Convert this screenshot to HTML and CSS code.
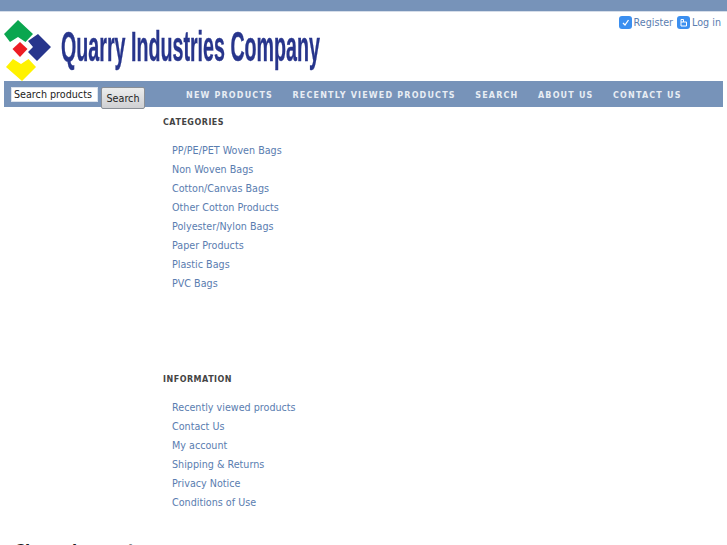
FILE: index.html
```html
<!DOCTYPE html>
<html lang="en">
<head>
<meta charset="utf-8">
<title>Quarry Industries Company</title>
<link rel="stylesheet" href="styles.css">
</head>
<body>
<div class="topbar"></div>
<div class="page">
  <header class="header">
    <svg class="logo" width="320" height="66" viewBox="0 0 320 66" aria-label="Quarry Industries Company">
      <path fill="#0aa64f" d="M4 19 L18 5 L33 19 L25.500 27 L18 22 L10 27 Z"/>
      <path fill="#27358c" d="M38 19 L51 32 L37 46 L28 37 L33 32 L28 26 Z"/>
      <path fill="#ed1c24" d="M20 27 L27.500 34 L20 42 L12.500 34 Z"/>
      <path fill="#fff200" d="M6 52 L13 44 L21 49 L28.500 44 L36 52 L22 66 Z"/>
      <text class="logo-text" x="61" y="46" textLength="259" lengthAdjust="spacingAndGlyphs">Quarry Industries Company</text>
    </svg>
    <div class="account">
      <a class="account-link" href="#"><svg class="account-icon" width="13" height="13" viewBox="0 0 13 13"><rect width="13" height="13" rx="3" fill="#3b8ff0"/><path d="M4 7 L6 9 L9.500 4" fill="none" stroke="#fff" stroke-width="1.300"/></svg>Register</a>
      <a class="account-link" href="#"><svg class="account-icon" width="13" height="13" viewBox="0 0 13 13"><rect width="13" height="13" rx="3" fill="#3b8ff0"/><path d="M4 3.500 H6.500 V6 H9.500 V10 H4 Z M4 6 H6.500" fill="none" stroke="#fff" stroke-width="1"/></svg>Log in</a>
    </div>
  </header>
  <nav class="navbar">
    <form class="search">
      <input class="search-input" type="text" value="Search products">
      <button class="search-button" type="button">Search</button>
    </form>
    <ul class="menu">
      <li><a href="#">New Products</a></li>
      <li><a href="#">Recently Viewed Products</a></li>
      <li><a href="#">Search</a></li>
      <li><a href="#">About Us</a></li>
      <li><a href="#">Contact Us</a></li>
    </ul>
  </nav>
  <main class="content">
    <section class="block block-categories">
      <h2 class="block-title">Categories</h2>
      <ul class="links">
        <li><a href="#">PP/PE/PET Woven Bags</a></li>
        <li><a href="#">Non Woven Bags</a></li>
        <li><a href="#">Cotton/Canvas Bags</a></li>
        <li><a href="#">Other Cotton Products</a></li>
        <li><a href="#">Polyester/Nylon Bags</a></li>
        <li><a href="#">Paper Products</a></li>
        <li><a href="#">Plastic Bags</a></li>
        <li><a href="#">PVC Bags</a></li>
      </ul>
    </section>
    <section class="block">
      <h2 class="block-title">Information</h2>
      <ul class="links">
        <li><a href="#">Recently viewed products</a></li>
        <li><a href="#">Contact Us</a></li>
        <li><a href="#">My account</a></li>
        <li><a href="#">Shipping &amp; Returns</a></li>
        <li><a href="#">Privacy Notice</a></li>
        <li><a href="#">Conditions of Use</a></li>
      </ul>
    </section>
  </main>
  <h1 class="bottom-title">Cheap bags at</h1>
</div>
</body>
</html>
```
FILE: styles.css
```css
html, body { margin: 0; padding: 0; height: 545px; overflow: hidden; background: #fff; }
body { font-family: "DejaVu Sans", sans-serif; font-size: 9.600px; color: #333; }
a { color: #5a7db0; text-decoration: none; }
ul { list-style: none; margin: 0; padding: 0; }

.topbar { height: 11px; background: #7793b9; border-bottom: 1px solid #d5dde9; }
.page { padding-left: 4px; width: 719px; }

.header { height: 69px; display: flex; justify-content: space-between; align-items: flex-start; }
.logo { display: block; margin-top: 3px; margin-left: -4px; flex: none; will-change: transform; }
.logo-text { font-family: "Liberation Sans", sans-serif; font-weight: bold; font-size: 43px; fill: #27358c; stroke: #27358c; stroke-width: 0.4px; }
.account { display: flex; gap: 4px; margin-top: 4px; margin-right: 2px; }
.account-link { display: flex; align-items: center; gap: 2px; line-height: 13px; }
.account-icon { display: block; flex: none; }

.navbar { height: 26px; background: #7793b9; display: flex; align-items: flex-start; }
.search { display: flex; align-items: flex-start; margin-left: 7px; width: 165px; flex: none; }
.search-input { box-sizing: border-box; width: 87px; height: 15px; margin: 6px 3px 0 0; padding: 0 2px; border: 1px solid #dde3ec; background: #fff; font: 9.600px "DejaVu Sans", sans-serif; color: #222; }
.search-button { box-sizing: border-box; width: 44px; height: 22px; margin-top: 6px; padding: 0; border: 1px solid #8a8f96; border-radius: 2px; background: linear-gradient(#eceded, #cfd0d3); font: 9.600px "DejaVu Sans", sans-serif; color: #222; }
.menu { display: flex; gap: 19.500px; margin-left: 10px; line-height: 27px; white-space: nowrap; }
.menu a { color: #e8edf4; font-size: 8px; font-weight: bold; letter-spacing: 1.180px; text-transform: uppercase; }

.content { padding-left: 159px; }
.block-title { margin: 0; font-size: 8px; font-weight: bold; letter-spacing: 0.500px; line-height: 12px; text-transform: uppercase; color: #444; }
.block { padding-top: 10px; }
.block-categories { height: 247px; }
.links { margin-top: 12px; padding-left: 9px; }
.links li { height: 19px; line-height: 19px; }

.bottom-title { margin: 29px 0 0 10px; font-size: 15px; font-weight: bold; line-height: 20px; color: #222; }
```
